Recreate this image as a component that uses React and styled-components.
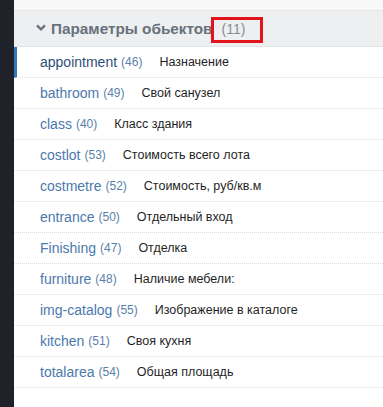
import React from 'react'
import styled, { createGlobalStyle } from 'styled-components'

const GlobalStyle = createGlobalStyle`
  html, body { margin: 0; padding: 0; background: #fff; }
  body { font-family: "Liberation Sans", Arial, sans-serif; }
`

const fields = [
  { key: 'appointment', count: 46, label: 'Назначение', active: true },
  { key: 'bathroom', count: 49, label: 'Свой санузел' },
  { key: 'class', count: 40, label: 'Класс здания' },
  { key: 'costlot', count: 53, label: 'Стоимость всего лота' },
  { key: 'costmetre', count: 52, label: 'Стоимость, руб/кв.м' },
  { key: 'entrance', count: 50, label: 'Отдельный вход' },
  { key: 'Finishing', count: 47, label: 'Отделка' },
  { key: 'furniture', count: 48, label: 'Наличие мебели:' },
  { key: 'img-catalog', count: 55, label: 'Изображение в каталоге' },
  { key: 'kitchen', count: 51, label: 'Своя кухня' },
  { key: 'totalarea', count: 54, label: 'Общая площадь' },
]

function App() {
  return (
    <Page>
      <GlobalStyle />
      <Sidebar />
      <Main>
        <TopStrip />
        <Header>
          <Chevron viewBox="0 0 10 7">
            <path d="M1 1.3 L5 5.3 L9 1.3" fill="none" stroke="#6b7480" strokeWidth="2.4" />
          </Chevron>
          <Title>Параметры обьектов</Title>
          <Total>(11)</Total>
          <Marker />
        </Header>
        <List>
          {fields.map(f => (
            <Row key={f.key} active={f.active}>
              <Key active={f.active}>{f.key}</Key>
              <Count>({f.count})</Count>
              <Label>{f.label}</Label>
            </Row>
          ))}
        </List>
      </Main>
    </Page>
  )
}

export default App

const Page = styled.div`
  display: flex;
  height: 407px;
  overflow: hidden;
`

const Sidebar = styled.div`
  width: 14px;
  flex-shrink: 0;
  background: #1f2228;
`

const Main = styled.div`
  flex: 1;
  display: flex;
  flex-direction: column;
  background: #fff;
`

const TopStrip = styled.div`
  height: 10px;
  background: #f8f8f8;
  border-bottom: 1px solid #e6e6e6;
`

const Header = styled.div`
  position: relative;
  height: 35px;
  display: flex;
  align-items: center;
  padding-left: 22px;
  background: #edeff0;
  border-bottom: 1px solid #e2e4e6;
`

const Chevron = styled.svg`
  width: 10px;
  height: 7px;
  margin-right: 5px;
  margin-top: -2px;
`

const Title = styled.span`
  font-size: 15.3px;
  font-weight: bold;
  color: #68717c;
`

const Total = styled.span`
  font-size: 14px;
  color: #868c94;
  margin-left: 9px;
`

const Marker = styled.div`
  position: absolute;
  left: 197px;
  top: 6px;
  width: 46px;
  height: 20px;
  border: 3px solid #e3131b;
`

const List = styled.div`
  display: flex;
  flex-direction: column;
`

const Row = styled.div`
  height: 30px;
  display: flex;
  align-items: center;
  padding-left: ${p => (p.active ? '23px' : '26px')};
  border-left: ${p => (p.active ? '3px solid #2f78bd' : 'none')};
  border-bottom: 1px dotted #dcdcdc;
`

const Key = styled.span`
  font-size: 14px;
  color: ${p => (p.active ? '#2f4f78' : '#4b78ad')};
`

const Count = styled.span`
  font-size: 12px;
  color: #5b7fab;
  margin-left: 4px;
`

const Label = styled.span`
  font-size: 12.5px;
  color: #1f1f1f;
  margin-left: 17px;
`
